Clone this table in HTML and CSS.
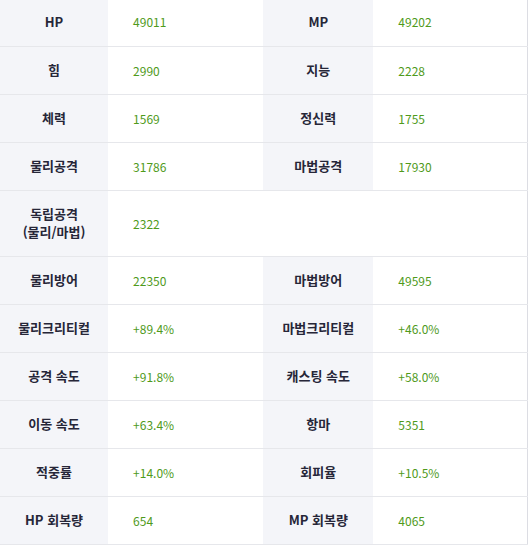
FILE: index.html
```html
<!DOCTYPE html>
<html lang="ko">
<head>
<meta charset="utf-8">
<link rel="stylesheet" href="styles.css">
</head>
<body>
<table class="stats">
  <colgroup>
    <col class="c-l1"><col class="c-v1"><col class="c-l2"><col class="c-v2">
  </colgroup>
  <tr class="first"><th>HP</th><td>49011</td><th>MP</th><td>49202</td></tr>
  <tr><th>힘</th><td>2990</td><th>지능</th><td>2228</td></tr>
  <tr><th>체력</th><td>1569</td><th>정신력</th><td>1755</td></tr>
  <tr><th>물리공격</th><td>31786</td><th>마법공격</th><td>17930</td></tr>
  <tr class="tall"><th>독립공격<br>(물리/마법)</th><td>2322</td><td class="empty"></td><td class="empty"></td></tr>
  <tr><th>물리방어</th><td>22350</td><th>마법방어</th><td>49595</td></tr>
  <tr><th>물리크리티컬</th><td>+89.4%</td><th>마법크리티컬</th><td>+46.0%</td></tr>
  <tr><th>공격 속도</th><td>+91.8%</td><th>캐스팅 속도</th><td>+58.0%</td></tr>
  <tr><th>이동 속도</th><td>+63.4%</td><th>항마</th><td>5351</td></tr>
  <tr><th>적중률</th><td>+14.0%</td><th>회피율</th><td>+10.5%</td></tr>
  <tr><th>HP 회복량</th><td>654</td><th>MP 회복량</th><td>4065</td></tr>
</table>
</body>
</html>
```

FILE: styles.css
```css
html, body {
  margin: 0;
  padding: 0;
  background: #ffffff;
}
.stats {
  border-collapse: collapse;
  table-layout: fixed;
  width: 528px;
  margin-top: -2px;
  border-right: 1px solid #dcdde3;
  font-family: "Noto Sans CJK KR", "Noto Sans", sans-serif;
}
.c-l1 { width: 108px; }
.c-v1 { width: 155px; }
.c-l2 { width: 110px; }
.c-v2 { width: 154px; }
.stats tr {
  height: 48px;
  border-bottom: 1px solid #e6e7eb;
}
.stats tr.tall {
  height: 66px;
}
.stats th {
  background: #f4f5f9;
  color: #262638;
  font-size: 13px;
  font-weight: 700;
  text-align: center;
  padding: 0;
  line-height: 18px;
}
.stats td {
  color: #4f9a1b;
  font-size: 12px;
  padding: 0 0 0 25px;
  text-align: left;
}
.stats td.empty {
  background: #ffffff;
}
```
